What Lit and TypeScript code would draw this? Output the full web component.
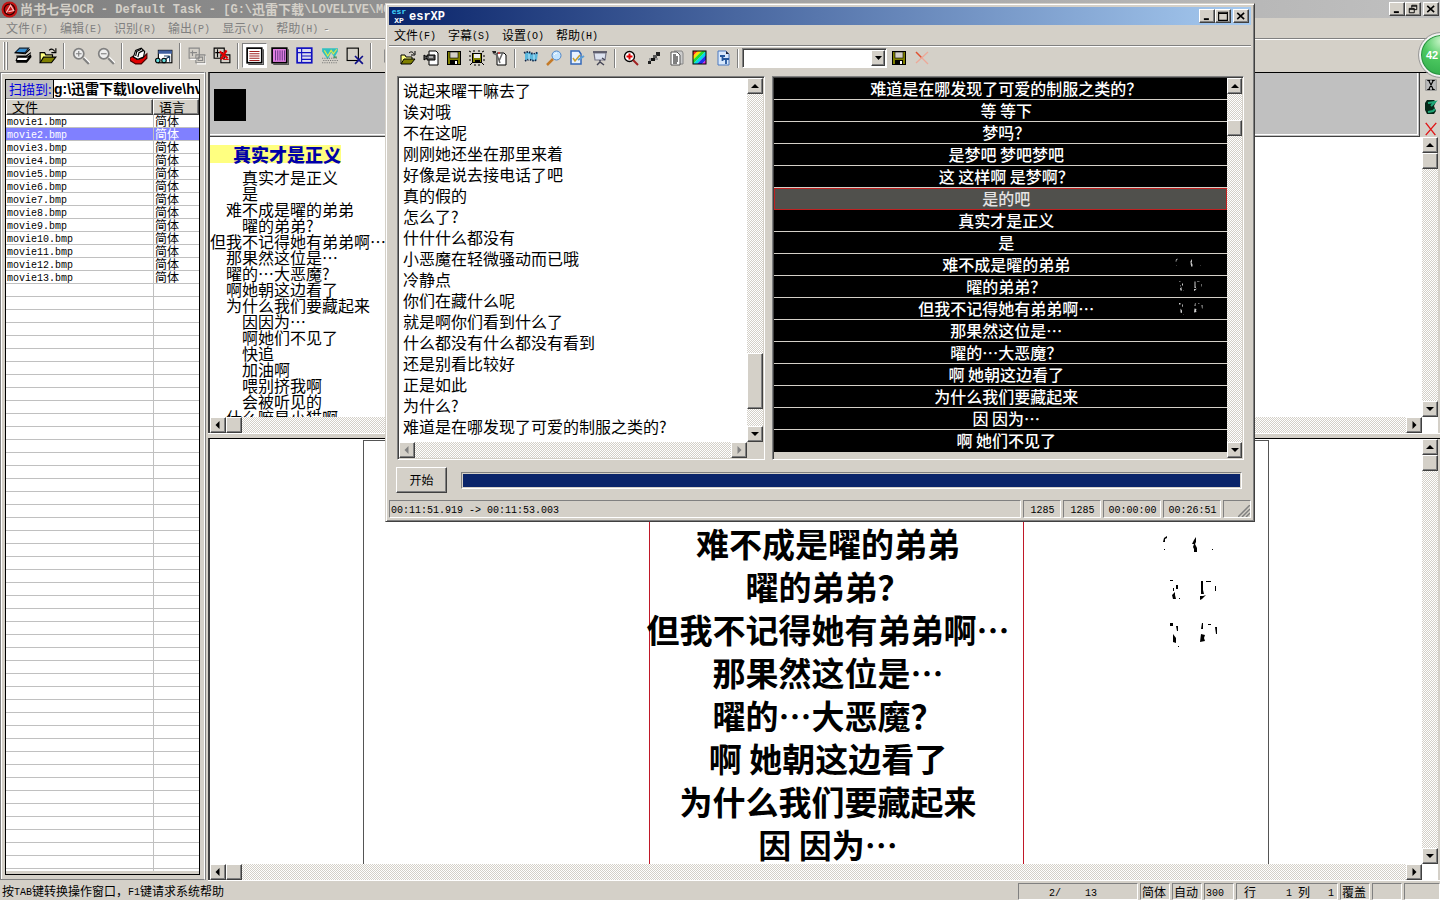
import { LitElement, html, svg, css, TemplateResult } from "lit";
import { customElement, property } from "lit/decorators.js";

/* ---------- text helpers ---------- */

// Sets Latin runs in a half-width face next to full-width Chinese text.
const mix = (text: string) =>
  text
    .split(/([\x20-\xff]+)/)
    .filter((part) => part !== "")
    .map((part) => (/[\x20-\xff]/.test(part) ? html`<span class="lat">${part}</span>` : html`<span>${part}</span>`));

/* ---------- icons ---------- */

const icon = (body: TemplateResult, size = 18) =>
  html`<svg width=${size} height=${size} viewBox="0 0 16 16" aria-hidden="true">${body}</svg>`;

const icons = {
  scan: svg`<path d="M5 1h8l-3 4H1z" fill="#3a8fd0" stroke="#123"/><path d="M1 5l9 1 4-4" fill="none" stroke="#000"/><path d="M2 8h9l4-3M2 8l8 1 5-4" fill="none" stroke="#000"/><path d="M3 9h9l3-2-3 5H2z" fill="#fff" stroke="#000"/><path d="M2 13h9l4-5" fill="none" stroke="#000" stroke-width="2"/>`,
  open: svg`<path d="M1 14V5h4l1 2h6v2" fill="#ffff80" stroke="#000"/><path d="M1 14l3-5h11l-4 5z" fill="#808000" stroke="#000"/><path d="M9 3c2-2 4-1 5 1M15 1v4h-4" fill="none" stroke="#000"/>`,
  zoomInGray: svg`<circle cx="6" cy="6" r="4.500" fill="#eee" stroke="#808080" stroke-width="1.500"/><path d="M3.500 6h5M6 3.500v5" stroke="#808080"/><path d="M10 10l5 5" stroke="#808080" stroke-width="2"/><path d="M11 9l5 5" stroke="#fff"/>`,
  zoomOutGray: svg`<circle cx="6" cy="6" r="4.500" fill="#eee" stroke="#808080" stroke-width="1.500"/><path d="M3.500 6h5" stroke="#808080"/><path d="M10 10l5 5" stroke="#808080" stroke-width="2"/><path d="M11 9l5 5" stroke="#fff"/>`,
  recognise: svg`<path d="M0 10l3-2 3 3 5-1 4-4v4l-5 5H5l-5-3z" fill="#e00000" stroke="#400"/><path d="M3 9l2-6 5-2 3 3-1 5-5 2z" fill="#fff" stroke="#000"/><path d="M5 8l1-4 4-2M7 9l1-4 4-2" fill="none" stroke="#000"/>`,
  find: svg`<rect x="3" y="3" width="12" height="11" fill="#fff" stroke="#000"/><rect x="3" y="3" width="12" height="3" fill="#4060a0"/><path d="M8 8h5M8 12l5-4M13 8v5" stroke="#246"/><circle cx="2.500" cy="12" r="2" fill="#6dd" stroke="#000"/><circle cx="8" cy="12" r="2" fill="#6dd" stroke="#000"/>`,
  layoutGray: svg`<path d="M1 1h9v9H1zM4 3v5M2 5h6M7 7h8v7H7zM9 9h4v3H9z" fill="none" stroke="#888"/><path d="M2 11h5M16 8v7H8" fill="none" stroke="#fff"/>`,
  layoutRed: svg`<path d="M1 1h9v9H1zM4 2v7M2 5h7M7 7h8v7H7z" fill="none" stroke="#000"/><path d="M6 4l7 6M12 3l-5 8" stroke="#e00000" stroke-width="2"/><path d="M9 11h5" stroke="#e00000"/>`,
  hText: svg`<rect x="1" y="1" width="13" height="13" fill="#fff" stroke="#000" stroke-width="1.500"/><path d="M3 4h9M3 6h9M3 8h9M3 10h9M3 12h9" stroke="#a02020"/><path d="M15.500 2v13.500H2" fill="none" stroke="#555"/>`,
  vText: svg`<rect x="1" y="1" width="13" height="13" fill="#e080e0" stroke="#000" stroke-width="1.500"/><path d="M4 3v9M6 3v9M8 3v9M10 3v9M12 3v9" stroke="#603080" stroke-width=".8"/><path d="M15.500 2v13.500H2" fill="none" stroke="#555"/>`,
  table: svg`<rect x="1" y="1" width="13" height="13" fill="#dde" stroke="#1010c0" stroke-width="1.500"/><path d="M5 1v13M1 5h13M5 8h9M5 11h9" stroke="#1010c0"/>`,
  picture: svg`<path d="M1 1h14v3l-3 5-3-4-3 6-5-7z" fill="#30c0c0"/><path d="M3 3l3 5 3-5 2 3 3-4" fill="none" stroke="#e8e840"/><path d="M1 10h14M2 12h14M1 14h14" stroke="#777" stroke-dasharray="1 1"/><path d="M11 9h3" stroke="#208040"/>`,
  erase: svg`<rect x="1" y="1" width="10" height="11" fill="none" stroke="#000"/><path d="M8 8l7 7M15 8l-7 7" stroke="#10108a" stroke-width="1.500"/>`,
  pointer: svg`<path d="M5 3v10l3-3 4 0z" fill="none" stroke="#888"/>`,
  video: svg`<path d="M6 1h7l2 2v12H6z" fill="#fff" stroke="#000"/><path d="M1 5l3 2V5h8v5H4V8l-3 2z" fill="#555" stroke="#000"/><path d="M6 7h4" stroke="#fff"/>`,
  save: svg`<rect x="1.500" y="1.500" width="13" height="13" fill="#808000" stroke="#000"/><rect x="4" y="2" width="8" height="6" fill="#d4d0c8" stroke="#000" stroke-width=".6"/><rect x="4" y="10" width="8" height="4.500" fill="#000"/><rect x="9" y="11" width="2" height="3" fill="#fff"/>`,
  saveAll: svg`<rect x="3.500" y="3.500" width="9" height="9" fill="#808000" stroke="#000"/><rect x="5" y="4" width="6" height="4" fill="#eee"/><rect x="6" y="10" width="5" height="2.500" fill="#000"/><path d="M0 1l2 1M5 0v2M10 0v2M15 1l-2 1M0 6h2M14 6h2M0 10h2M14 10h2M1 15l2-2M6 14v2M10 14v2M15 15l-2-2" stroke="#000"/>`,
  script: svg`<path d="M5 3h7l2 2v10H5z" fill="#fff" stroke="#000"/><path d="M1 3l4 2 3 8M11 2L7 11" fill="none" stroke="#666" stroke-width="1.500"/><path d="M0 1h4v2H1z" fill="#222"/><circle cx="7" cy="3" r="1" fill="#d33"/>`,
  film: svg`<path d="M2 3q4-2 6 0t7-1l-1 8q-4 2-6 0t-6 1z" fill="#5bb7dc"/><path d="M1 3q4-2 7 0t7-1M2 11q3-2 6-1t6 0" fill="none" stroke="#124" stroke-width="1.800" stroke-dasharray="1.500 1"/><path d="M6 4v6M11 4v6" stroke="#bdeaff"/>`,
  lens: svg`<circle cx="10.500" cy="5.500" r="4.500" fill="#c4e4ff" stroke="#4f86c8"/><path d="M7 9l-6 6" stroke="#c47a28" stroke-width="2.500"/><path d="M8 5q1-2 3-2" fill="none" stroke="#fff"/>`,
  edit: svg`<path d="M2 1h8l2 3v10H2z" fill="#e8f2ff" stroke="#3468b8" stroke-width="1.500"/><path d="M4 8l2 3 5-6" fill="none" stroke="#c8a030" stroke-width="1.500"/><path d="M9 10l6-4" stroke="#5a9fd8" stroke-width="2"/>`,
  board: svg`<path d="M2 3h12l-1 7H3z" fill="#dce2f0" stroke="#778" stroke-width="1.200"/><path d="M1 2h14" stroke="#556" stroke-width="1.800"/><path d="M8 10v3M5 15l3-3 4 3M13 10l-3-2" fill="none" stroke="#445" stroke-width="1.400"/>`,
  zoomRed: svg`<circle cx="6.500" cy="6.500" r="5" fill="#fff" stroke="#000" stroke-width="1.300"/><path d="M3.500 6.500h6M6.500 3.500v6" stroke="#e00000" stroke-width="2"/><path d="M10 10l5 5" stroke="#a02020" stroke-width="2"/>`,
  steps: svg`<path d="M10 2h4v4h-4zM2 11h3v3H2z" fill="#222"/><path d="M7 5h4v3H7z" fill="#555"/><path d="M5 8h4v3H5z" fill="#111"/><path d="M9 8h3v2H9zM3 8h2v3H3z" fill="#999"/>`,
  notes: svg`<path d="M5 1h8l1 2v11H6" fill="#ccc" stroke="#888"/><path d="M2 2h6l3 3v10H2z" fill="#fff" stroke="#555"/><path d="M4 5h3M4 7h5M4 9h5M4 11h5M4 13h4" stroke="#000"/>`,
  colour: svg`<path d="M1 1h5L1 6z" fill="#ff3020"/><path d="M6 1h4L1 10V6z" fill="#ffe000"/><path d="M10 1h4L1 14v-4z" fill="#20e030"/><path d="M14 1v4L5 14H1z" fill="#00d8e8"/><path d="M14 5v5l-4 4H5z" fill="#2030f0"/><path d="M14 10v4h-4z" fill="#e020e0"/><rect x="1" y="1" width="13" height="13" fill="none" stroke="#000"/>`,
  font: svg`<path d="M3 1h8l3 3v11H3z" fill="#d8e8fc" stroke="#4a78c0"/><path d="M11 1v3h3" fill="#223"/><path d="M5 6h5M7.500 6v5M8 9h6M11 9v5" stroke="#24569c" stroke-width="1.800"/>`,
  remove: svg`<path d="M2 2l6 6" stroke="#e05030" stroke-width="1.500"/><path d="M8 8l6 6M14 2L2 13" stroke="#eda898" stroke-width="1.300"/>`,
  seal: svg`<circle cx="8" cy="8" r="7.500" fill="#c41414"/><circle cx="8" cy="8" r="5" fill="none" stroke="#300" stroke-width="1.200"/><path d="M5 11l4-7 3 5-5 1" fill="none" stroke="#fbb" stroke-width="1.200"/>`,
  min: svg`<path d="M3 13h8" stroke="#000" stroke-width="3"/>`,
  max: svg`<path d="M1 2h14v13H1zM1 4h14" fill="none" stroke="#000" stroke-width="1.800"/>`,
  restore: svg`<path d="M6 6V2h8v7h-4M6 3.500h8M2 7h8v7H2zM2 8.500h8" fill="none" stroke="#000" stroke-width="1.500"/>`,
  close: svg`<path d="M2 3l11 10M13 3L2 13" stroke="#000" stroke-width="2.600"/>`,
  boxX: svg`<rect x="1" y="1" width="14" height="14" fill="#bbb" stroke="#808080"/><path d="M3 2h4M9 2h4M3 14h4M9 14h4M5 2l6 12M11 2L5 14" stroke="#000" stroke-width="1.500"/>`,
  leaf: svg`<path d="M4 1h7l2 2-2 4 2 5-2 3H4l-2-4V4z" fill="#062818"/><path d="M5 4l7-1-4 4M5 13l5-1 2-2" fill="none" stroke="#20a878" stroke-width="2"/>`,
  redX: svg`<path d="M2 1l11 14M14 1L2 15" stroke="#e01818" stroke-width="1.600"/>`,
};

/* ---------- shared look ---------- */

const chrome = css`
  * {
    box-sizing: border-box;
  }
  .lat {
    font-family: "Liberation Mono", monospace;
    font-size: 10px;
    line-height: 0;
    vertical-align: 1px;
    white-space: pre;
  }
  button {
    appearance: none;
    margin: 0;
    padding: 0;
    border: 0;
    border-radius: 0;
    background: none;
    color: inherit;
    font: inherit;
    display: flex;
    align-items: center;
    justify-content: center;
  }
  svg {
    display: block;
    flex: none;
  }
  .raised {
    background: #d4d0c8;
    border: 1px solid;
    border-color: #fff #404040 #404040 #fff;
    box-shadow: inset -1px -1px 0 #808080;
  }
`;

@customElement("win-scroll")
class WinScroll extends LitElement {
  @property({ type: Boolean, reflect: true }) horizontal = false;
  @property({ type: Boolean }) disabled = false;
  @property({ type: Number }) before = 0;
  @property({ type: Number }) after = 1;
  @property({ type: Number }) thumb = 16;

  static styles = [
    chrome,
    css`
      :host {
        display: flex;
        flex-direction: column;
        min-width: 0;
        min-height: 0;
        background: repeating-conic-gradient(#fff 0 25%, #d4d0c8 0 50%) 0 0 / 2px 2px;
      }
      :host([horizontal]) {
        flex-direction: row;
      }
      .step {
        flex: 0 0 16px;
        min-width: 0;
      }
      .gap {
        min-width: 0;
        min-height: 0;
      }
    `,
  ];

  private arrow(d: string) {
    return html`<svg width="8" height="8" viewBox="0 0 8 8" aria-hidden="true">
      <path d=${d} fill=${this.disabled ? "#808080" : "#000"} />
    </svg>`;
  }

  render() {
    const back = this.horizontal ? "M5.500 0v8L1.500 4z" : "M0 6h8L4 2z";
    const fwd = this.horizontal ? "M2.500 0v8L6.500 4z" : "M0 2h8L4 6z";
    return html`
      <button class="step raised" aria-label="back">${this.arrow(back)}</button>
      <div class="gap" style="flex:${this.before} 1 0"></div>
      ${this.disabled ? "" : html`<div class="raised" style="flex:0 0 ${this.thumb}px"></div>`}
      <div class="gap" style="flex:${this.after} 1 0"></div>
      <button class="step raised" aria-label="forward">${this.arrow(fwd)}</button>
    `;
  }
}

/* ---------- data ---------- */

const files = Array.from({ length: 13 }, (_, i) => `movie${i + 1}.bmp`);

const recognised: [number, string][] = [
  [2, "真实才是正义"],
  [2, "是"],
  [1, "难不成是曜的弟弟"],
  [2, "曜的弟弟?"],
  [0, "但我不记得她有弟弟啊…"],
  [1, "那果然这位是…"],
  [1, "曜的…大恶魔?"],
  [1, "啊她朝这边看了"],
  [1, "为什么我们要藏起来"],
  [2, "因因为…"],
  [2, "啊她们不见了"],
  [2, "快追"],
  [2, "加油啊"],
  [2, "喂别挤我啊"],
  [2, "会被听见的"],
  [1, "什么嘛是小猫啊"],
];

const pageLines = [
  "难不成是曜的弟弟",
  "曜的弟弟？",
  "但我不记得她有弟弟啊…",
  "那果然这位是…",
  "曜的…大恶魔？",
  "啊 她朝这边看了",
  "为什么我们要藏起来",
  "因 因为…",
];

const script = [
  "说起来曜干嘛去了",
  "诶对哦",
  "不在这呢",
  "刚刚她还坐在那里来着",
  "好像是说去接电话了吧",
  "真的假的",
  "怎么了?",
  "什什什么都没有",
  "小恶魔在轻微骚动而已哦",
  "冷静点",
  "你们在藏什么呢",
  "就是啊你们看到什么了",
  "什么都没有什么都没有看到",
  "还是别看比较好",
  "正是如此",
  "为什么?",
  "难道是在哪发现了可爱的制服之类的?",
].join("\n");

const subtitles = [
  "难道是在哪发现了可爱的制服之类的？",
  "等 等下",
  "梦吗？",
  "是梦吧 梦吧梦吧",
  "这 这样啊 是梦啊？",
  "是的吧",
  "真实才是正义",
  "是",
  ...pageLines,
  "啊 她们不见了",
];

// Stray marks left over from the video background, one drawing per line of text.
const marks = [
  svg`<path d="M2 3l3-2v2l-2 1v3H1zM2 14h1v1H2zM32 5l2-3v5l-1 2 2 4v4h-3v-3l-1-2 1-3h-2zM50 14h1v1h-1z"/>`,
  svg`<path d="M8 2h3v1H8zM14 7h2v4h-2zM11 10h1v3h-1zM10 17l3-3v3l1 4h-3zM17 20h1v1h-1zM39 3h2v9l1 4h-3zM44 3h5v1h-5zM53 8h1v5h-1zM38 18h3l3-1-4 4-2 1z"/>`,
  svg`<path d="M8 2h3v3H8zM14 5h2v5h-1zM11 13l3 4v5l-3-1zM16 25h1v1h-1zM40 2h1v6h-2zM46 3h3v1h-3zM53 6h2v7h-1zM39 13l4 1-1 3 1 3-5 1z"/>`,
];

/* ---------- application ---------- */

@customElement("app-root")
class AppRoot extends LitElement {
  static styles = [
    chrome,
    css`
      :host {
        display: flex;
        flex-direction: column;
        position: relative;
        height: 100vh;
        overflow: hidden;
        background: #d4d0c8;
        color: #000;
        font: 12px/16px "Noto Sans CJK SC", sans-serif;
      }

      /* title bars and menus */
      .title {
        display: flex;
        align-items: center;
        height: 18px;
        flex: none;
        font-weight: 700;
        font-size: 13px;
        white-space: pre;
        gap: 2px;
      }
      .title .lat {
        font-size: 12px;
      }
      .title.back {
        background: linear-gradient(90deg, #808080, #c0c0c0);
        color: #d4d0c8;
        padding: 0 1px;
      }
      .title.front {
        background: linear-gradient(90deg, #0a246a, #a6caf0);
        color: #fff;
        padding: 0 2px;
      }
      .caption {
        flex: 1;
        min-width: 0;
      }
      .frame-buttons {
        display: flex;
      }
      .frame-buttons button {
        width: 16px;
        height: 14px;
      }
      .frame-buttons button:last-child {
        margin-left: 2px;
      }
      .menu {
        display: flex;
        height: 20px;
        align-items: center;
        flex: none;
      }
      .menu button {
        padding: 0 6px;
        height: 18px;
      }
      .window .menu button {
        padding: 0 7px 0 5px;
      }
      .menu.off {
        color: #808080;
        text-shadow: 1px 1px 0 #fff;
      }

      /* toolbars */
      .tools {
        display: flex;
        align-items: center;
        border-top: 1px solid #808080;
        box-shadow: inset 0 1px 0 #fff;
        flex: none;
      }
      .tools.main {
        height: 34px;
        padding-left: 3px;
      }
      .tools.main button {
        width: 25px;
        height: 25px;
      }
      .tools.main button.on {
        background: #fff;
        border: 1px solid;
        border-color: #808080 #fff #fff #808080;
      }
      .tools.sub {
        height: 25px;
        padding-left: 7px;
      }
      .tools.sub button {
        width: 23px;
        height: 22px;
      }
      .grip {
        width: 7px;
        height: 28px;
        display: flex;
        gap: 1px;
      }
      .grip i {
        width: 2px;
        border-left: 1px solid #fff;
        border-right: 1px solid #808080;
      }
      .rule {
        width: 8px;
        height: 26px;
        display: flex;
        justify-content: center;
      }
      .rule i {
        width: 2px;
        border-left: 1px solid #808080;
        border-right: 1px solid #fff;
      }
      .sub .rule {
        height: 19px;
      }
      .combo {
        display: flex;
        width: 145px;
        height: 20px;
        padding: 1px;
        border: 1px solid;
        border-color: #808080 #fff #fff #808080;
        background: #fff;
        box-shadow: inset 1px 1px 0 #404040;
      }
      .combo select {
        appearance: none;
        border: 0;
        background: transparent;
        flex: 1;
        min-width: 0;
      }
      .combo .drop {
        width: 14px;
        display: flex;
        align-items: center;
        justify-content: center;
      }

      /* work area */
      .work {
        flex: 1;
        min-height: 0;
        display: flex;
      }
      .side {
        width: 205px;
        border: 1px solid #808080;
        border-right-color: #fff;
        box-shadow: inset 1px 1px 0 #fff, 1px 0 0 #808080;
        padding: 6px 4px 4px;
        display: flex;
        margin-right: 3px;
      }
      .box {
        flex: 1;
        min-width: 0;
        border: 1px solid #000;
        display: flex;
        flex-direction: column;
        padding-bottom: 3px;
        background: #d4d0c8;
      }
      .target {
        display: flex;
        height: 19px;
        border-bottom: 1px solid #808080;
      }
      .target label {
        width: 48px;
        padding-left: 3px;
        background: #c0c0c0;
        color: #0000e0;
        font-size: 13px;
        line-height: 18px;
        border-right: 1px solid #000;
        white-space: nowrap;
      }
      .target input {
        flex: 1;
        min-width: 0;
        border: 0;
        padding: 0;
        background: #fff;
        font: 700 14px/18px "Liberation Sans", "Noto Sans CJK SC", sans-serif;
      }
      .grid {
        flex: 1;
        min-height: 0;
        background: repeating-linear-gradient(#fff 0 12px, #c0c0c0 12px 13px) 0 16px;
      }
      .grid .wrap {
        height: 100%;
        background: linear-gradient(#c0c0c0, #c0c0c0) 147px 0 / 1px 100% no-repeat;
      }
      table {
        width: 100%;
        border-collapse: separate;
        border-spacing: 0;
        table-layout: fixed;
      }
      th {
        height: 16px;
        padding: 0 0 0 5px;
        font-weight: 400;
        font-size: 13px;
        line-height: 14px;
        text-align: left;
      }
      th:last-child {
        width: 46px;
      }
      td {
        height: 13px;
        padding: 0 0 0 1px;
        font-size: 12px;
        line-height: 12px;
        vertical-align: top;
        border-bottom: 1px solid #c0c0c0;
      }
      td:last-child {
        border-left: 1px solid #c0c0c0;
      }
      tr.on td {
        background: #8080ff;
        color: #fff;
      }

      .panes {
        flex: 1;
        min-width: 0;
        display: flex;
        flex-direction: column;
        gap: 5px;
      }
      .pane {
        min-height: 0;
        border: solid #000;
        border-width: 1px 0 0 2px;
        border-left-color: #404040;
        display: grid;
        padding-right: 2px;
        box-shadow: 0 1px 0 #fff;
      }
      .pane.upper {
        flex: 361 1 0;
        grid-template: 64px minmax(0, 1fr) 16px / minmax(0, 1fr) 16px;
      }
      .pane.lower {
        flex: 442 1 0;
        grid-template: minmax(0, 1fr) 16px / minmax(0, 1fr) 16px;
      }
      .strip {
        grid-column: 1 / 3;
        display: flex;
        background: #c0c0c0;
      }
      .film {
        flex: 1;
        padding: 16px 4px;
        border: solid #404040;
        border-width: 0 1px 1px 0;
        box-shadow: inset -1px -1px 0 #c0c0c0, inset -2px -2px 0 #fff;
      }
      .thumb {
        width: 32px;
        height: 32px;
        background: #000;
      }
      .marks {
        width: 18px;
        display: flex;
        flex-direction: column;
        align-items: center;
        justify-content: space-between;
        padding: 4px 0 0 3px;
        background: #d4d0c8;
      }
      .marks button {
        height: 16px;
      }
      .text {
        background: #fff;
        overflow: hidden;
        padding-top: 8px;
        font-size: 16px;
        line-height: 16px;
        white-space: nowrap;
      }
      .text h2 {
        margin: 0 0 6px;
        padding-left: 23px;
        display: table;
        background: #ffff80;
        color: #0000a8;
        font-size: 18px;
        line-height: 18px;
        font-weight: 900;
      }
      .in1 {
        padding-left: 16px;
      }
      .in2 {
        padding-left: 32px;
      }
      .blank {
        background: #fff;
      }
      .canvas {
        background: #fff;
        overflow: hidden;
        padding: 1px 0 0 153px;
        display: flex;
      }
      .page {
        flex: none;
        display: grid;
        grid-template-columns: 286px 375px 244px;
        border: solid #555;
        border-width: 1px 1px 0 0;
      }
      .page .margin {
        border-left: 1px solid #555;
      }
      .column {
        border: solid #c01828;
        border-width: 0 1px;
        padding: 81px 17px 0 0;
        font-size: 33px;
        line-height: 43px;
        font-weight: 700;
      }
      .column div {
        display: flex;
        justify-content: center;
        white-space: pre;
      }
      .specks {
        padding: 94px 0 0 138px;
        display: flex;
        flex-direction: column;
        gap: 15px;
      }

      /* status bars */
      .status {
        display: flex;
        gap: 2px;
        flex: none;
        white-space: pre;
      }
      .status.main {
        height: 20px;
        padding: 3px 0 0 2px;
      }
      .cell {
        border: 1px solid;
        border-color: #808080 #fff #fff #808080;
        padding-left: 1px;
      }
      .hint {
        flex: 1;
      }
      .c30 {
        width: 30px;
      }
      .c36 {
        width: 36px;
      }
      .c102 {
        width: 102px;
        padding-left: 7px;
      }
      .c120 {
        width: 120px;
        padding-left: 30px;
      }
      .status.main .cell {
        line-height: 15px;
      }

      /* the window in front */
      .window {
        position: absolute;
        left: 385px;
        top: 3px;
        width: 870px;
        height: 519px;
        padding: 3px;
        display: flex;
        flex-direction: column;
        background: #d4d0c8;
        border: 1px solid;
        border-color: #d4d0c8 #404040 #404040 #d4d0c8;
        box-shadow: inset 1px 1px 0 #fff, inset -1px -1px 0 #808080;
      }
      .logo {
        width: 16px;
        font: 700 8px/9px "Liberation Mono", monospace;
        color: #40d8ff;
        text-align: center;
      }
      .logo b {
        display: block;
        color: #fff;
      }
      .body {
        flex: 1;
        min-height: 0;
        display: flex;
        gap: 7px;
        padding: 6px 7px 0 8px;
      }
      .sunken {
        border: 1px solid;
        border-color: #808080 #fff #fff #808080;
        box-shadow: inset 1px 1px 0 #404040;
        padding: 1px;
        display: grid;
        min-width: 0;
      }
      .script {
        flex: 367 1 0;
        grid-template: minmax(0, 1fr) 16px / minmax(0, 1fr) 16px;
      }
      .script textarea {
        border: 0;
        margin: 0;
        padding: 2px 4px;
        resize: none;
        overflow: hidden;
        background: #fff;
        color: #000;
        font: 16px/21px "Noto Sans CJK SC", sans-serif;
        white-space: pre;
      }
      .subs {
        flex: 473 1 0;
        grid-template: minmax(0, 1fr) / minmax(0, 1fr) 15px;
      }
      .subs ol {
        list-style: none;
        margin: 0;
        padding: 0;
        color: #fff;
        font-size: 16px;
        font-weight: 500;
        line-height: 20px;
      }
      .subs li {
        display: grid;
        grid-template-columns: 1fr auto 1fr;
        height: 22px;
        padding: 0 24px 0 36px;
        background: #000;
        border-bottom: 1px solid #d4d0c8;
        white-space: pre;
      }
      .subs li:last-child {
        border-color: #000;
      }
      .subs li span {
        grid-column: 2;
      }
      .subs li svg {
        justify-self: end;
        align-self: center;
      }
      .subs li.on {
        background: #50504c;
        color: #e4e4e4;
        border-bottom-color: #c02020;
        box-shadow: inset 1px 1px 0 #c02020, inset -1px 0 0 #c02020;
      }
      .run {
        display: flex;
        align-items: center;
        gap: 14px;
        height: 40px;
        padding: 0 9px 0 7px;
      }
      .run button {
        width: 51px;
        height: 26px;
      }
      .meter {
        flex: 1;
        height: 17px;
        border: 1px solid;
        border-color: #808080 #fff #fff #808080;
        padding: 1px;
      }
      .meter i {
        display: block;
        height: 100%;
        background: #0a246a;
      }
      .window .status {
        height: 18px;
      }
      .window .cell {
        line-height: 15px;
      }
      .window .c38 {
        width: 38px;
        text-align: center;
      }
      .window .c58 {
        width: 58px;
        text-align: center;
      }
      .window .c28 {
        width: 28px;
        display: flex;
        justify-content: flex-end;
        align-items: flex-end;
      }

      .ball {
        position: absolute;
        right: -23px;
        top: 33px;
        width: 44px;
        height: 44px;
        border-radius: 50%;
        border: 2px solid #f2f2f2;
        outline: 1px solid #999;
        background: radial-gradient(circle at 50% 15%, #c8f5c8, #4cc860 45%, #2ea848);
        box-shadow: inset 0 0 0 1px #2a9040;
        color: #fff;
        font: 700 11px/40px "Liberation Sans", sans-serif;
        text-align: left;
        padding-left: 5px;
      }
    `,
  ];

  private tool(name: keyof typeof icons, on = false) {
    return html`<button class=${on ? "on" : ""} aria-label=${name}>${icon(icons[name])}</button>`;
  }

  private smallTool(name: keyof typeof icons) {
    return html`<button aria-label=${name}>${icon(icons[name], 16)}</button>`;
  }

  private rule() {
    return html`<span class="rule"><i></i></span>`;
  }

  private frameButtons(middle: "max" | "restore") {
    return html`<span class="frame-buttons"
      ><button class="raised" aria-label="minimise">${icon(icons.min, 10)}</button
      ><button class="raised" aria-label=${middle}>${icon(icons[middle], 10)}</button
      ><button class="raised" aria-label="close">${icon(icons.close, 10)}</button></span
    >`;
  }

  private sidePanel() {
    return html`<aside class="side">
      <div class="box">
        <div class="target">
          <label for="target">扫描到:</label>
          <input id="target" .value=${"g:\\迅雷下载\\lovelive\\hv"} />
        </div>
        <div class="grid">
          <div class="wrap">
            <table>
              <thead>
                <tr>
                  <th class="raised">文件</th>
                  <th class="raised">语言</th>
                </tr>
              </thead>
              <tbody>
                ${files.map(
                  (f, i) => html`<tr class=${i === 1 ? "on" : ""}>
                    <td>${mix(f)}</td>
                    <td>简体</td>
                  </tr>`
                )}
              </tbody>
            </table>
          </div>
        </div>
      </div>
    </aside>`;
  }

  private panes() {
    return html`<main class="panes">
      <section class="pane upper">
        <div class="strip">
          <div class="film"><div class="thumb"></div></div>
          <div class="marks">
            <button aria-label="cancel">${icon(icons.boxX, 12)}</button>
            <button aria-label="apply">${icon(icons.leaf, 16)}</button>
            <button aria-label="delete">${icon(icons.redX, 14)}</button>
          </div>
        </div>
        <div class="text">
          <h2>真实才是正义</h2>
          ${recognised.map(([n, t]) => html`<div class="in${n}">${t}</div>`)}
        </div>
        <win-scroll></win-scroll>
        <win-scroll horizontal></win-scroll>
        <div class="blank"></div>
      </section>
      <section class="pane lower">
        <div class="canvas">
          <div class="page">
            <div class="margin"></div>
            <div class="column">${pageLines.map((t) => html`<div>${t}</div>`)}</div>
            <div class="specks">
              ${marks.map((m) => html`<svg width="56" height="28" viewBox="0 0 56 28" aria-hidden="true">${m}</svg>`)}
            </div>
          </div>
        </div>
        <win-scroll></win-scroll>
        <win-scroll horizontal></win-scroll>
        <div class="blank"></div>
      </section>
    </main>`;
  }

  private frontWindow() {
    return html`<section class="window" aria-label="esrXP">
      <header class="title front"
        ><span class="logo">esr<b>XP</b></span
        ><span class="caption">${mix("esrXP")}</span
        >${this.frameButtons("max")}</header
      >
      <nav class="menu">
        ${["文件(F)", "字幕(S)", "设置(O)", "帮助(H)"].map((m) => html`<button><span>${mix(m)}</span></button>`)}
      </nav>
      <div class="tools sub">
        ${(["open", "video", "save", "saveAll", "script"] as const).map((n) => this.smallTool(n))} ${this.rule()}
        ${(["film", "lens", "edit", "board"] as const).map((n) => this.smallTool(n))} ${this.rule()}
        ${(["zoomRed", "steps", "notes", "colour", "font"] as const).map((n) => this.smallTool(n))} ${this.rule()}
        <span class="combo">
          <select aria-label="preset"></select>
          <span class="drop raised"
            ><svg width="7" height="4" viewBox="0 0 7 4" aria-hidden="true"><path d="M0 0h7L3.500 4z" /></svg
          ></span>
        </span>
        ${this.smallTool("save")}${this.smallTool("remove")}
      </div>
      <div class="body">
        <div class="sunken script">
          <textarea aria-label="script" wrap="off" .value=${script}></textarea>
          <win-scroll .before=${259} .after=${17} .thumb=${56}></win-scroll>
          <win-scroll horizontal disabled></win-scroll>
          <div></div>
        </div>
        <div class="sunken subs">
          <ol>
            ${subtitles.map(
              (t, i) => html`<li class=${i === 5 ? "on" : ""}
                ><span>${t}</span
                >${i > 7 && i < 11
                  ? html`<svg width="28" height="14" viewBox="0 0 56 28" fill="#ccc" aria-hidden="true">${marks[i - 8]}</svg>`
                  : ""}</li
              >`
            )}
          </ol>
          <win-scroll .before=${26} .after=${308}></win-scroll>
        </div>
      </div>
      <div class="run">
        <button class="raised">开始</button>
        <div class="meter" role="progressbar" aria-label="progress" aria-valuenow="100"><i></i></div>
      </div>
      <footer class="status">
        <span class="cell hint">${mix("00:11:51.919 -> 00:11:53.003")}</span>
        <span class="cell c38">${mix("1285")}</span>
        <span class="cell c38">${mix("1285")}</span>
        <span class="cell c58">${mix("00:00:00")}</span>
        <span class="cell c58">${mix("00:26:51")}</span>
        <span class="cell c28"
          ><svg width="12" height="12" viewBox="0 0 12 12" aria-hidden="true">
            <path d="M0 12L12 0M4 12l8-8M8 12l4-4" stroke="#808080" stroke-width="1.500" /></svg
        ></span>
      </footer>
    </section>`;
  }

  render() {
    return html`
      <header class="title back"
        >${icon(icons.seal, 17)}<span class="caption"
          >${mix("尚书七号OCR - Default Task - [G:\\迅雷下载\\LOVELIVE\\MOVIE2.BMP]")}</span
        >${this.frameButtons("restore")}</header
      >
      <nav class="menu off">
        ${["文件(F)", "编辑(E)", "识别(R)", "输出(P)", "显示(V)", "帮助(H)"].map(
          (m) => html`<button><span>${mix(m)}</span></button>`
        )}
        <span>-</span>
      </nav>
      <div class="tools main">
        <span class="grip"><i></i><i></i></span>
        ${this.tool("scan")}${this.tool("open")}${this.rule()}
        ${this.tool("zoomInGray")}${this.tool("zoomOutGray")}${this.rule()}
        ${this.tool("recognise")}${this.tool("find")}${this.rule()}
        ${this.tool("layoutGray")}${this.tool("layoutRed")}${this.rule()}
        ${this.tool("hText", true)}${this.tool("vText")}${this.tool("table")}${this.tool("picture")}${this.tool("erase")}
        ${this.rule()}${this.tool("pointer")}
      </div>
      <div class="work">${this.sidePanel()} ${this.panes()}</div>
      <footer class="status main">
        <span class="hint">按${mix("TAB")}键转换操作窗口，${mix("F1")}键请求系统帮助</span>
        <span class="cell c120">${mix("2/    13")}</span>
        <span class="cell c30">简体</span>
        <span class="cell c30">自动</span>
        <span class="cell c30">${mix("300")}</span>
        <span class="cell c102">${mix("行     1 列   1")}</span>
        <span class="cell c30">覆盖</span>
        <span class="cell c30"></span>
        <span class="cell c36"></span>
      </footer>
      ${this.frontWindow()}
      <div class="ball">42</div>
    `;
  }
}
